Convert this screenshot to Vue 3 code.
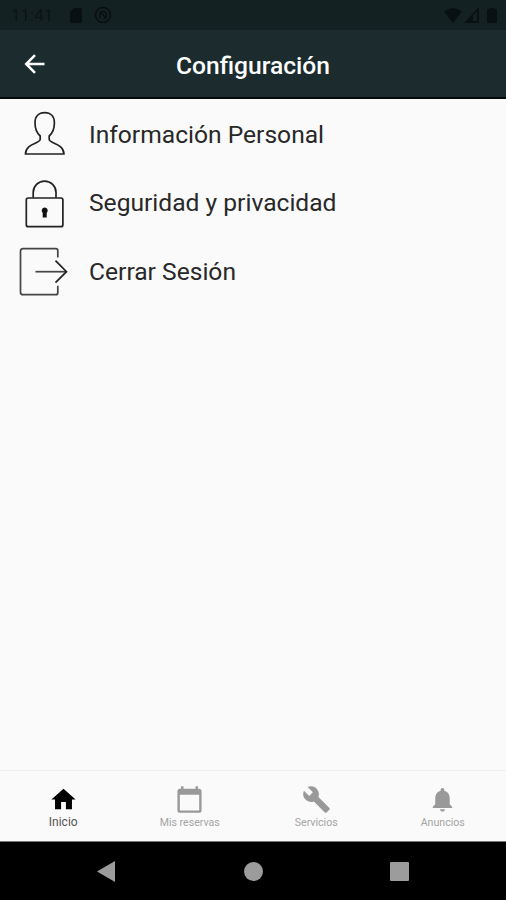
<template>
  <div class="screen">
    <div class="status-bar">
      <span class="clock">11:41</span>
      <svg class="sd" viewBox="0 0 12 15"><path d="M4 0h6.500q1.500 0 1.500 1.500v12q0 1.500-1.500 1.500h-9Q0 15 0 13.500V4z" /></svg>
      <svg class="sync" viewBox="0 0 18 18">
        <circle cx="9" cy="9" r="7.500" />
        <path d="M6 12.500V8a3.300 3.300 0 0 1 6.500 1 3.300 3.300 0 0 1-3 3.500M6 5.500l6 6.500" />
      </svg>
      <div class="signals">
        <svg width="18" height="15" viewBox="0 0 18 15"><path d="M0 3.500Q9-3.500 18 3.500L9 15z" /></svg>
        <svg width="15" height="16" viewBox="0 0 15 16"><path fill-rule="evenodd" d="M0 16L15 0v16zM9 8.500V14h4V4.500z" /></svg>
        <svg class="battery" width="10" height="15" viewBox="0 0 10 15"><path d="M2.500 0h5v1H9q1 0 1 1v12q0 1-1 1H1q-1 0-1-1V2q0-1 1-1h1.500z" /></svg>
      </div>
    </div>

    <header class="header">
      <svg class="back" viewBox="0 0 22 22"><path d="M20.500 11H2.500M11 2.200L2.200 11l8.800 8.800" /></svg>
      <h1>Configuración</h1>
    </header>

    <main class="options">
      <div class="option">
        <svg class="option-icon" viewBox="0 0 50 50">
          <path d="M25.700 3.700c-6 0-9.700 4-9.700 10 0 6 1 9.500 5.200 13.300v3.200c0 4.500-14.700 4-14.700 14.800h38.400c0-10.800-14.700-10.300-14.700-14.800V27c4.200-3.800 5.200-7.300 5.200-13.300 0-6-3.700-10-9.700-10z" />
        </svg>
        <span>Información Personal</span>
      </div>
      <div class="option">
        <svg class="option-icon" viewBox="0 0 50 50">
          <rect x="7.300" y="20" width="36.600" height="28.700" rx="2" />
          <path d="M14.200 19.800V14.500a11.400 11.400 0 0 1 22.800 0v5.300" />
          <path class="solid" d="M25.700 29.500a3.100 3.100 0 0 1 2 5.400v4.600h-4v-4.600a3.100 3.100 0 0 1 2-5.400z" />
        </svg>
        <span>Seguridad y privacidad</span>
      </div>
      <div class="option">
        <svg class="option-icon gray" viewBox="0 0 50 50">
          <path d="M38.800 10.500V3.700q0-2-2-2H4q-2.500 0-2.500 2.500v41q0 2.500 2.500 2.500h32.800q2 0 2-2V38.700" />
          <path d="M16.500 24.700H47" />
          <path class="tip" d="M36.500 13.700L47.500 24.700 36.500 35.700" />
        </svg>
        <span>Cerrar Sesión</span>
      </div>
    </main>

    <nav class="tabs">
      <div v-for="tab in tabs" :key="tab.label" class="tab" :class="{ active: tab.active }">
        <svg viewBox="0 0 24 24"><path :d="tab.icon" /></svg>
        <span>{{ tab.label }}</span>
      </div>
    </nav>

    <div class="system-nav">
      <svg class="sys-back" viewBox="0 0 18 21"><path d="M0 10.500L18 0v21z" /></svg>
      <span class="sys-home"></span>
      <span class="sys-recent"></span>
    </div>
  </div>
</template>

<script setup>
const tabs = [
  {
    label: 'Inicio',
    active: true,
    icon: 'M10 20v-6h4v6h5v-8h3L12 3 2 12h3v8z'
  },
  {
    label: 'Mis reservas',
    icon: 'M20 3h-1V1h-2v2H7V1H5v2H4c-1.100 0-2 .9-2 2v16c0 1.100.9 2 2 2h16c1.100 0 2-.9 2-2V5c0-1.100-.9-2-2-2zm0 18H4V8h16v13z'
  },
  {
    label: 'Servicios',
    icon: 'M22.700 19l-9.100-9.100c.9-2.300.4-5-1.500-6.900-2-2-5-2.400-7.400-1.300L9 6 6 9 1.600 4.700C.4 7.100.9 10.100 2.900 12.100c1.900 1.900 4.600 2.400 6.900 1.500l9.100 9.100c.4.4 1 .4 1.400 0l2.300-2.300c.5-.4.5-1.100.1-1.400z'
  },
  {
    label: 'Anuncios',
    icon: 'M12 22c1.100 0 2-.9 2-2h-4c0 1.100.9 2 2 2zm6-6v-5c0-3.070-1.640-5.640-4.500-6.320V4c0-.83-.67-1.500-1.500-1.500s-1.500.67-1.500 1.500v.68C7.630 5.360 6 7.920 6 11v5l-2 2v1h16v-1l-2-2z'
  }
]
</script>

<style>
body {
  margin: 0;
}
</style>

<style scoped>
.screen {
  display: flex;
  flex-direction: column;
  width: 506px;
  height: 900px;
  background: #fafafa;
  font-family: Roboto, sans-serif;
  overflow: hidden;
}

svg {
  display: block;
  flex: none;
}

.status-bar {
  display: flex;
  align-items: center;
  box-sizing: border-box;
  height: 30px;
  padding: 0 9px 0 11px;
  background: #142122;
  color: #0b1316;
  fill: #091013;
}

.clock {
  width: 59px;
  font-size: 17px;
}

.sd {
  width: 12px;
  height: 15px;
}

.sync {
  width: 18px;
  height: 18px;
  margin-left: 12px;
  fill: none;
  stroke: #091013;
  stroke-width: 1.7;
}

.signals {
  display: flex;
  align-items: center;
  gap: 2px;
  margin-left: auto;
}

.battery {
  margin-left: 6px;
}

.header {
  display: grid;
  grid-template-columns: 1fr auto 1fr;
  align-items: center;
  box-sizing: border-box;
  height: 69px;
  border-bottom: 2px solid #030808;
  background: #1b2b2e;
  color: #fff;
}

.header h1 {
  margin: 3px 0 0;
  font-size: 24.6px;
  font-weight: 500;
}

.back {
  width: 22px;
  height: 22px;
  margin: 1px 0 0 24px;
  fill: none;
  stroke: #fff;
  stroke-width: 2.5;
}

.options {
  flex: 1;
}

.option {
  display: flex;
  align-items: center;
  gap: 20px;
  height: 69px;
  padding-left: 19px;
  color: #282828;
  font-size: 24.6px;
}

.option:first-child span {
  padding-top: 1px;
}

.option-icon {
  width: 50px;
  height: 50px;
  fill: none;
  stroke: #222;
  stroke-width: 1.7;
}

.option-icon.gray {
  stroke: #444;
}

.option-icon .solid {
  fill: #111;
  stroke: none;
}

.option-icon .tip {
  stroke: #222;
}

.tabs {
  display: flex;
  box-sizing: border-box;
  height: 72px;
  border-top: 1px solid #eee;
  border-bottom: 1px solid #777;
}

.tab {
  display: flex;
  flex: 1;
  flex-direction: column;
  align-items: center;
  padding-top: 14px;
  color: #a4a4a4;
  fill: #999;
  font-size: 10.6px;
  line-height: 18px;
}

.tab svg {
  width: 29px;
  height: 29px;
}

.tab.active {
  color: #555;
  fill: #000;
  font-size: 12px;
  line-height: 16px;
}

.system-nav {
  display: flex;
  align-items: center;
  box-sizing: border-box;
  height: 58px;
  padding-left: 97px;
  background: #000;
}

.sys-back {
  width: 18px;
  height: 21px;
  fill: #9c9c9c;
}

.sys-home {
  width: 19px;
  height: 19px;
  margin-left: 129px;
  border-radius: 50%;
  background: #9c9c9c;
}

.sys-recent {
  width: 19px;
  height: 19px;
  margin-left: 127px;
  border-radius: 1px;
  background: #9c9c9c;
}
</style>
